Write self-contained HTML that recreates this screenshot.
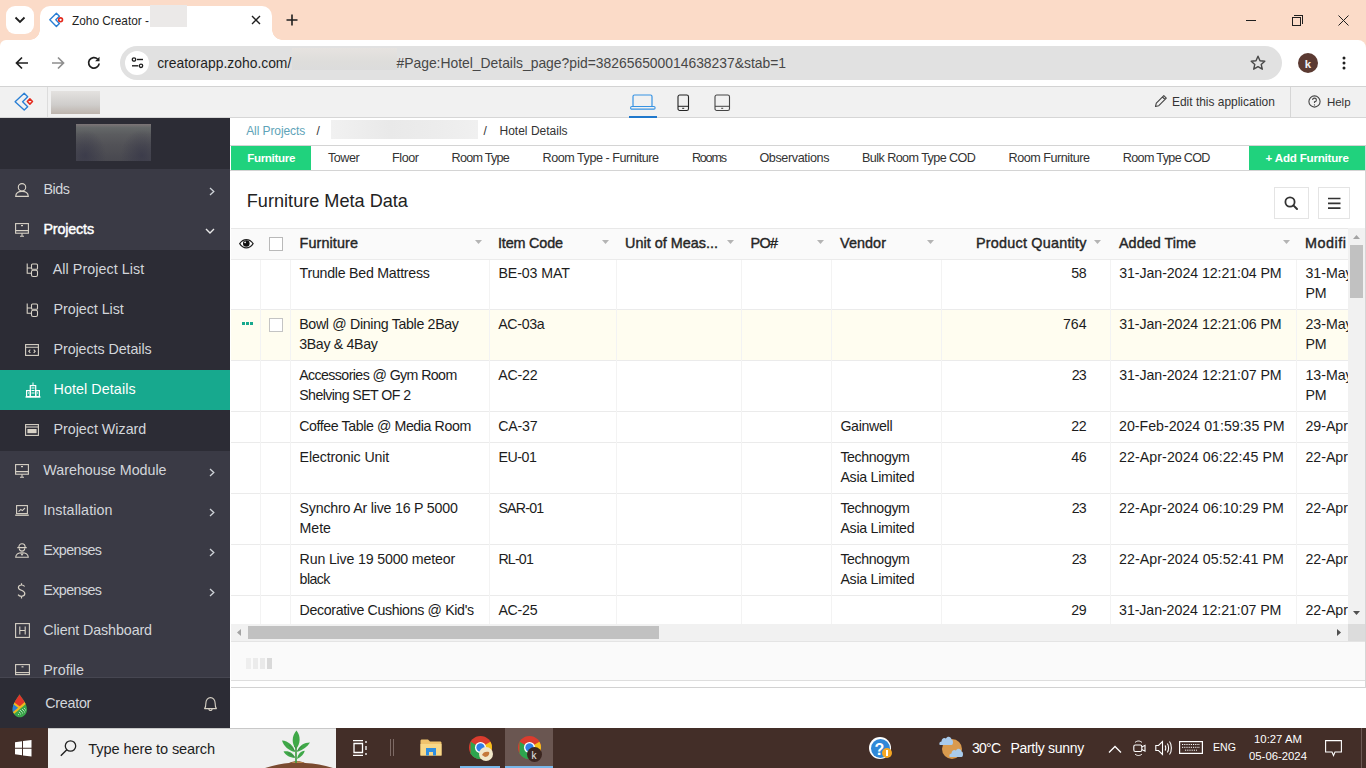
<!DOCTYPE html>
<html><head><meta charset="utf-8"><style>
*{margin:0;padding:0;box-sizing:border-box}
html,body{width:1366px;height:768px;overflow:hidden;font-family:"Liberation Sans",sans-serif;background:#fff;position:relative}
.a{position:absolute}
.t{position:absolute;white-space:nowrap}
svg{position:absolute;overflow:visible}
</style></head><body>
<div class="a" style="left:0px;top:0px;width:1366px;height:48px;background:#fbdbc8;"></div>
<div class="a" style="left:30px;top:30px;width:10px;height:10px;background:radial-gradient(circle at 0 0,#fbdbc8 9.5px,#fff 10px);"></div>
<div class="a" style="left:6px;top:6px;width:28px;height:28px;background:#fff;border-radius:9px"></div>
<svg style="left:14px;top:16px;" width="12" height="8" viewBox="0 0 12 8"><path d="M1.5 1.5 L6 6 L10.5 1.5" fill="none" stroke="#1f1f1f" stroke-width="1.8"/></svg>
<div class="a" style="left:40px;top:6px;width:232px;height:34px;background:#fff;border-radius:10px 10px 0 0"></div>
<div class="a" style="left:272px;top:30px;width:10px;height:10px;background:radial-gradient(circle at 100% 0,#fbdbc8 9.5px,#fff 10px);"></div>
<svg style="left:40px;top:0px;" width="30" height="40" viewBox="0 0 30 40"><path d="M9.8 19.8 L16.4 13.3 L19.4 16.2 L15.8 19.8 L19.4 23.4 L16.4 26.4 Z" fill="none" stroke="#2a7fd4" stroke-width="1.4" stroke-linejoin="round"/><circle cx="20.6" cy="19.8" r="1.9" fill="none" stroke="#e42a1d" stroke-width="1.6"/></svg>
<div class="t" style="left:72.00px;top:16.00px;font-size:11.850px;line-height:11.850px;color:#1f1f1f;">Zoho Creator -</div>
<div class="a" style="left:150px;top:5px;width:37px;height:22px;background:#ebe9e8;"></div>
<svg style="left:251px;top:15px;" width="10" height="10" viewBox="0 0 10 10"><path d="M1 1 L9 9 M9 1 L1 9" stroke="#1f1f1f" stroke-width="1.4"/></svg>
<svg style="left:286px;top:14px;" width="12" height="12" viewBox="0 0 12 12"><path d="M6 0.5 V11.5 M0.5 6 H11.5" stroke="#1f1f1f" stroke-width="1.6"/></svg>
<div class="a" style="left:1246px;top:20px;width:10px;height:1px;background:#1f1f1f;"></div>
<div class="a" style="left:1292px;top:17px;width:9px;height:9px;background:transparent;border:1px solid #1f1f1f"></div>
<div class="a" style="left:1294px;top:15px;width:9px;height:9px;background:transparent;border-top:1px solid #1f1f1f;border-right:1px solid #1f1f1f"></div>
<svg style="left:1338px;top:15px;" width="11" height="11" viewBox="0 0 11 11"><path d="M0.5 0.5 L10.5 10.5 M10.5 0.5 L0.5 10.5" stroke="#1f1f1f" stroke-width="1"/></svg>
<div class="a" style="left:0px;top:40px;width:1366px;height:46px;background:#fff;border-radius:6px 8px 0 0"></div>
<svg style="left:15px;top:56px;" width="14" height="14" viewBox="0 0 14 14"><path d="M13 7 H2 M7 1.5 L1.5 7 L7 12.5" fill="none" stroke="#1f1f1f" stroke-width="1.7"/></svg>
<svg style="left:51px;top:56px;" width="14" height="14" viewBox="0 0 14 14"><path d="M1 7 H12 M7 1.5 L12.5 7 L7 12.5" fill="none" stroke="#8e8e8e" stroke-width="1.7"/></svg>
<svg style="left:87px;top:56px;" width="14" height="14" viewBox="0 0 14 14"><path d="M12.2 7.5 A5.3 5.3 0 1 1 10.6 3" fill="none" stroke="#1f1f1f" stroke-width="1.7"/><path d="M12.5 0.8 V5.2 H8.1 Z" fill="#1f1f1f"/></svg>
<div class="a" style="left:120px;top:46px;width:1162px;height:34px;background:#e1e1e1;border-radius:17px"></div>
<div class="a" style="left:125px;top:51px;width:24px;height:24px;background:#fff;border-radius:12px"></div>
<svg style="left:131px;top:57px;" width="13" height="12" viewBox="0 0 13 12"><circle cx="3" cy="2.5" r="1.7" fill="none" stroke="#1f1f1f" stroke-width="1.3"/><path d="M6 2.5 H12" stroke="#1f1f1f" stroke-width="1.4"/><circle cx="10" cy="8.8" r="1.7" fill="none" stroke="#1f1f1f" stroke-width="1.3"/><path d="M1 8.8 H7.2" stroke="#1f1f1f" stroke-width="1.4"/></svg>
<div class="t" style="left:157.20px;top:57.00px;font-size:13.900px;line-height:13.900px;color:#1f1f1f;letter-spacing:-0.013px;">creatorapp.zoho.com/</div>
<div class="a" style="left:292px;top:48px;width:105px;height:22px;background:linear-gradient(180deg,#e6e3e0,#dedddb 60%,#dcdcdc);"></div>
<div class="t" style="left:396.50px;top:57.00px;font-size:13.900px;line-height:13.900px;color:#474747;letter-spacing:-0.010px;">#Page:Hotel_Details_page?pid=382656500014638237&amp;stab=1</div>
<svg style="left:1250px;top:55px;" width="16" height="16" viewBox="0 0 16 16"><path d="M8 1.2 L10 5.8 L14.8 6.2 L11.2 9.4 L12.3 14.2 L8 11.7 L3.7 14.2 L4.8 9.4 L1.2 6.2 L6 5.8 Z" fill="none" stroke="#474747" stroke-width="1.4" stroke-linejoin="round"/></svg>
<div class="a" style="left:1298px;top:53px;width:20px;height:20px;background:#5b3a32;border-radius:10px"></div>
<div class="t" style="left:1304.80px;top:59.00px;font-size:11.450px;line-height:11.450px;color:#f2f2f2;font-weight:bold;">k</div>
<svg style="left:1342px;top:56px;" width="4" height="14" viewBox="0 0 4 14"><circle cx="2" cy="2" r="1.5" fill="#1f1f1f"/><circle cx="2" cy="7" r="1.5" fill="#1f1f1f"/><circle cx="2" cy="12" r="1.5" fill="#1f1f1f"/></svg>
<div class="a" style="left:0px;top:86px;width:1366px;height:32px;background:#f1f1f1;border-top:1px solid #d3d3d3;border-bottom:1px solid #d6d6d6"></div>
<svg style="left:8px;top:88px;" width="36" height="28" viewBox="0 0 36 28"><path d="M7.1 13.7 L16.2 5.3 L19.7 8.7 L14.6 13.7 L19.7 18.7 L16.2 22.1 Z" fill="none" stroke="#2a7fd4" stroke-width="1.35" stroke-linejoin="round"/><path d="M21.9 10.9 L24.5 13.5 L21.9 16.1 L19.3 13.5 Z" fill="none" stroke="#e42a1d" stroke-width="1.5" stroke-linejoin="round"/></svg>
<div class="a" style="left:47px;top:87px;width:1px;height:30px;background:#dcdcdc;"></div>
<div class="a" style="left:51px;top:91px;width:49px;height:23px;background:linear-gradient(180deg,#e4e2e0,#cfcdcb 60%,#bdb4ad);"></div>
<svg style="left:630px;top:94px;" width="26" height="16" viewBox="0 0 26 16"><rect x="3" y="1" width="19" height="12" rx="1.5" fill="none" stroke="#3793e3" stroke-width="1.2"/><rect x="0.6" y="12.5" width="24.5" height="2.6" rx="1.2" fill="#f1f1f1" stroke="#3793e3" stroke-width="1.1"/></svg>
<div class="a" style="left:629px;top:116px;width:28px;height:2px;background:#1f78cc;"></div>
<svg style="left:677px;top:94px;" width="13" height="17" viewBox="0 0 13 17"><rect x="1" y="1" width="10.5" height="15.5" rx="1.8" fill="none" stroke="#222" stroke-width="1.1"/><path d="M1 12.3 H11.5" stroke="#222" stroke-width="1"/><rect x="5.2" y="13.8" width="2" height="1" fill="#222"/></svg>
<svg style="left:714px;top:94px;" width="17" height="17" viewBox="0 0 17 17"><rect x="1" y="1" width="14.5" height="15.5" rx="1.8" fill="none" stroke="#444" stroke-width="1.1"/><path d="M1 12.3 H15.5" stroke="#444" stroke-width="1"/><rect x="7.2" y="13.8" width="2" height="1" fill="#444"/></svg>
<svg style="left:1154px;top:94px;" width="14" height="14" viewBox="0 0 14 14"><path d="M1.5 12.5 L2.3 9.2 L9.8 1.7 L12.3 4.2 L4.8 11.7 Z M8.5 3 L11 5.5" fill="none" stroke="#444" stroke-width="1.1" stroke-linejoin="round"/></svg>
<div class="t" style="left:1172.00px;top:97.00px;font-size:11.950px;line-height:11.950px;color:#333;">Edit this application</div>
<div class="a" style="left:1290px;top:87px;width:1px;height:30px;background:#d6d6d6;"></div>
<svg style="left:1308px;top:95px;" width="13" height="13" viewBox="0 0 13 13"><circle cx="6.5" cy="6.5" r="5.6" fill="none" stroke="#444" stroke-width="1.1"/><path d="M4.6 5 A1.9 1.9 0 1 1 6.5 6.9 V8" fill="none" stroke="#444" stroke-width="1.1"/><circle cx="6.5" cy="9.9" r="0.65" fill="#444"/></svg>
<div class="t" style="left:1326.90px;top:97.00px;font-size:11.500px;line-height:11.500px;color:#333;letter-spacing:0.015px;">Help</div>
<div class="a" style="left:0px;top:118px;width:230px;height:51px;background:#2c2c35;"></div>
<div class="a" style="left:76px;top:124px;width:75px;height:37px;background:radial-gradient(ellipse 28% 70% at 12% 85%,rgba(55,55,72,0.75),rgba(55,55,72,0)),radial-gradient(ellipse 28% 70% at 88% 85%,rgba(55,55,72,0.75),rgba(55,55,72,0)),linear-gradient(180deg,#7d7577 0,#656869 10%,#5b5c5f 28%,#525257 55%,#48484f 100%);"></div>
<div class="a" style="left:0px;top:169px;width:230px;height:81px;background:#3a3a45;"></div>
<div class="a" style="left:0px;top:250px;width:230px;height:120px;background:#2c2c35;"></div>
<div class="a" style="left:0px;top:370px;width:230px;height:40px;background:#17a98e;"></div>
<div class="a" style="left:0px;top:410px;width:230px;height:41px;background:#2c2c35;"></div>
<div class="a" style="left:0px;top:451px;width:230px;height:226px;background:#3a3a45;"></div>
<svg style="left:15px;top:183px;" width="14" height="14" viewBox="0 0 14 14"><circle cx="7" cy="4.3" r="3.7" fill="none" stroke="#d8d2c6" stroke-width="1.1"/><path d="M0.7 13.4 C0.9 9.6 3.6 8.4 7 8.4 C10.4 8.4 13.1 9.6 13.3 13.4 Z" fill="none" stroke="#d8d2c6" stroke-width="1.1"/></svg>
<div class="t" style="left:43.40px;top:182.00px;font-size:14.300px;line-height:14.300px;color:#d3d6db;letter-spacing:-0.438px;">Bids</div>
<svg style="left:209px;top:187px;" width="6" height="9" viewBox="0 0 6 9"><path d="M1 1 L4.8 4.5 L1 8" fill="none" stroke="#cfd3d8" stroke-width="1.3"/></svg>
<svg style="left:15px;top:223px;" width="14" height="14" viewBox="0 0 14 14"><rect x="0.6" y="0.6" width="12.8" height="9.6" fill="none" stroke="#d8d2c6" stroke-width="1.1"/><path d="M0.6 7.6 H13.4 M5 13.3 H9 M7 10.2 V13.3" fill="none" stroke="#d8d2c6" stroke-width="1.1"/><rect x="6" y="2" width="2" height="1.2" fill="#d8d2c6"/></svg>
<div class="t" style="left:43.40px;top:222.00px;font-size:14.300px;line-height:14.300px;color:#fff;letter-spacing:-0.136px;-webkit-text-stroke:0.45px #fff;">Projects</div>
<svg style="left:205px;top:228px;" width="10" height="6" viewBox="0 0 10 6"><path d="M1 1 L5 5 L9 1" fill="none" stroke="#e8e8e8" stroke-width="1.4"/></svg>
<svg style="left:26px;top:263px;" width="13" height="15" viewBox="0 0 13 15"><path d="M1.2 0.5 V10.2 H5.5 M1.2 5 H5.5" fill="none" stroke="#d8d2c6" stroke-width="1.1"/><rect x="5.5" y="1" width="6" height="5.2" rx="1" fill="none" stroke="#d8d2c6" stroke-width="1.1"/><rect x="5.5" y="7.2" width="6" height="6.3" rx="1.6" fill="none" stroke="#d8d2c6" stroke-width="1.1"/></svg>
<div class="t" style="left:52.70px;top:262.00px;font-size:14.300px;line-height:14.300px;color:#d3d6db;letter-spacing:0.067px;">All Project List</div>
<svg style="left:26px;top:303px;" width="13" height="15" viewBox="0 0 13 15"><path d="M1.2 0.5 V10.2 H5.5 M1.2 5 H5.5" fill="none" stroke="#d8d2c6" stroke-width="1.1"/><rect x="5.5" y="1" width="6" height="5.2" rx="1" fill="none" stroke="#d8d2c6" stroke-width="1.1"/><rect x="5.5" y="7.2" width="6" height="6.3" rx="1.6" fill="none" stroke="#d8d2c6" stroke-width="1.1"/></svg>
<div class="t" style="left:53.50px;top:302.00px;font-size:14.300px;line-height:14.300px;color:#d3d6db;letter-spacing:-0.039px;">Project List</div>
<svg style="left:25px;top:344px;" width="14" height="12" viewBox="0 0 14 12"><rect x="0.6" y="0.6" width="12.8" height="10.8" fill="none" stroke="#d8d2c6" stroke-width="1.1"/><path d="M0.6 3.3 H13.4 M5.3 5.6 L3.8 7.2 L5.3 8.8 M8.7 5.6 L10.2 7.2 L8.7 8.8" fill="none" stroke="#d8d2c6" stroke-width="1.1"/></svg>
<div class="t" style="left:53.50px;top:342.00px;font-size:14.300px;line-height:14.300px;color:#d3d6db;letter-spacing:-0.076px;">Projects Details</div>
<svg style="left:25px;top:382px;" width="16" height="16" viewBox="0 0 16 16"><path d="M0.5 15 H15.5" stroke="#fff" stroke-width="1.3"/><rect x="5.3" y="3.6" width="5.4" height="11" fill="none" stroke="#fff" stroke-width="1.2"/><rect x="1.6" y="8.6" width="3.7" height="6" fill="none" stroke="#fff" stroke-width="1.2"/><rect x="10.7" y="8.6" width="3.7" height="6" fill="none" stroke="#fff" stroke-width="1.2"/><path d="M8 0.5 V3.6 M6.5 6 H9.5 M6.5 8.5 H9.5 M6.5 11 H9.5 M3 11 H4 M12 11 H13" stroke="#fff" stroke-width="1"/></svg>
<div class="t" style="left:53.50px;top:382.00px;font-size:14.300px;line-height:14.300px;color:#fff;letter-spacing:0.086px;">Hotel Details</div>
<svg style="left:25px;top:424px;" width="14" height="12" viewBox="0 0 14 12"><rect x="0.6" y="0.6" width="12.8" height="10.8" fill="none" stroke="#d8d2c6" stroke-width="1.1"/><path d="M0.6 3 H13.4" fill="none" stroke="#d8d2c6" stroke-width="1.1"/><rect x="2.4" y="5" width="9.2" height="4.2" fill="#d8d2c6"/></svg>
<div class="t" style="left:53.50px;top:422.00px;font-size:14.300px;line-height:14.300px;color:#d3d6db;letter-spacing:-0.014px;">Project Wizard</div>
<svg style="left:15px;top:464px;" width="14" height="14" viewBox="0 0 14 14"><rect x="0.6" y="0.6" width="12.8" height="9.6" fill="none" stroke="#d8d2c6" stroke-width="1.1"/><path d="M0.6 7.6 H13.4 M5 13.3 H9 M7 10.2 V13.3" fill="none" stroke="#d8d2c6" stroke-width="1.1"/><rect x="6" y="2" width="2" height="1.2" fill="#d8d2c6"/></svg>
<div class="t" style="left:43.30px;top:463.00px;font-size:14.300px;line-height:14.300px;color:#d3d6db;letter-spacing:-0.011px;">Warehouse Module</div>
<svg style="left:209px;top:468px;" width="6" height="9" viewBox="0 0 6 9"><path d="M1 1 L4.8 4.5 L1 8" fill="none" stroke="#cfd3d8" stroke-width="1.3"/></svg>
<svg style="left:15px;top:505px;" width="14" height="11" viewBox="0 0 14 11"><rect x="1.6" y="0.6" width="10.8" height="8" fill="none" stroke="#d8d2c6" stroke-width="1.1"/><path d="M0.2 10.2 H13.8" stroke="#d8d2c6" stroke-width="1.3"/><path d="M3.6 6.6 L5.8 4.4 L7.3 5.6 L10 3" fill="none" stroke="#d8d2c6" stroke-width="1.1"/></svg>
<div class="t" style="left:43.30px;top:503.00px;font-size:14.300px;line-height:14.300px;color:#d3d6db;letter-spacing:0.067px;">Installation</div>
<svg style="left:209px;top:508px;" width="6" height="9" viewBox="0 0 6 9"><path d="M1 1 L4.8 4.5 L1 8" fill="none" stroke="#cfd3d8" stroke-width="1.3"/></svg>
<svg style="left:15px;top:543px;" width="14" height="15" viewBox="0 0 14 15"><path d="M2.3 4.6 H11.7 M3.8 4.6 C3.8 1.6 5.5 0.7 7 0.7 C8.5 0.7 10.2 1.6 10.2 4.6 M4.3 5.6 C4.3 9 9.7 9 9.7 5.6 M0.7 14.3 C0.9 10.8 3 9.7 7 9.7 C11 9.7 13.1 10.8 13.3 14.3 Z M5.5 9.8 L7 12 L8.5 9.8" fill="none" stroke="#d8d2c6" stroke-width="1.1"/></svg>
<div class="t" style="left:43.30px;top:543.00px;font-size:14.300px;line-height:14.300px;color:#d3d6db;letter-spacing:-0.587px;">Expenses</div>
<svg style="left:209px;top:548px;" width="6" height="9" viewBox="0 0 6 9"><path d="M1 1 L4.8 4.5 L1 8" fill="none" stroke="#cfd3d8" stroke-width="1.3"/></svg>
<svg style="left:16px;top:583px;" width="11" height="16" viewBox="0 0 11 16"><path d="M8.6 3.6 C8 2.4 6.8 2 5.5 2 C3.6 2 2.4 3 2.4 4.5 C2.4 8 8.8 6.6 8.8 10.6 C8.8 12.3 7.4 13.3 5.5 13.3 C4 13.3 2.8 12.8 2.1 11.6 M5.5 0.3 V2 M5.5 13.3 V15.5" fill="none" stroke="#d8d2c6" stroke-width="1.2"/></svg>
<div class="t" style="left:43.30px;top:583.00px;font-size:14.300px;line-height:14.300px;color:#d3d6db;letter-spacing:-0.587px;">Expenses</div>
<svg style="left:209px;top:588px;" width="6" height="9" viewBox="0 0 6 9"><path d="M1 1 L4.8 4.5 L1 8" fill="none" stroke="#cfd3d8" stroke-width="1.3"/></svg>
<svg style="left:15px;top:623px;" width="15" height="15" viewBox="0 0 15 15"><rect x="0.6" y="0.6" width="13.8" height="13.8" fill="none" stroke="#d8d2c6" stroke-width="1.1"/><path d="M4.8 3.6 V11.4 M10.2 3.6 V11.4 M4.8 7.5 H10.2" fill="none" stroke="#d8d2c6" stroke-width="1.1"/></svg>
<div class="t" style="left:43.30px;top:623.00px;font-size:14.300px;line-height:14.300px;color:#d3d6db;letter-spacing:-0.113px;">Client Dashboard</div>
<svg style="left:15px;top:664px;" width="15" height="12" viewBox="0 0 15 12"><rect x="0.6" y="0.6" width="13.8" height="10" fill="none" stroke="#d8d2c6" stroke-width="1.1"/><path d="M0.6 8.6 H14.4" fill="none" stroke="#d8d2c6" stroke-width="1.1"/><rect x="6.5" y="2.2" width="2" height="1.2" fill="#d8d2c6"/></svg>
<div class="t" style="left:43.30px;top:663.00px;font-size:14.300px;line-height:14.300px;color:#d3d6db;letter-spacing:0.027px;">Profile</div>
<div class="a" style="left:0px;top:677px;width:230px;height:51px;background:#2c2c35;border-top:1px solid #464651"></div>
<svg style="left:12px;top:694px;" width="16" height="24" viewBox="0 0 16 24"><defs><clipPath id="dr"><path d="M7.5 0.3 C9 3.5 15 9 15 15.5 C15 20 11.5 23.3 7.8 23.3 C4 23.3 0.6 20 0.6 15.5 C0.6 9 6 3.5 7.5 0.3 Z"/></clipPath></defs><g clip-path="url(#dr)"><rect x="0" y="0" width="16" height="24" fill="#3aa54a"/><path d="M0 8.5 L7.5 13.5 L0 19.5 Z" fill="#2a7fd4"/><path d="M7.5 0 L14.5 7.5 L7.4 13 L1 8.5 Z" fill="#e0352b"/><path d="M1 8.8 L7.4 13.4" stroke="#f2b81e" stroke-width="2"/><path d="M1.5 19 L15 7.5" stroke="#f2b81e" stroke-width="2.2"/><rect x="8" y="16" width="0.9" height="0.9" fill="#cfe8cf"/><rect x="10" y="15" width="0.9" height="0.9" fill="#cfe8cf"/><rect x="12" y="14" width="0.9" height="0.9" fill="#cfe8cf"/><rect x="7" y="18" width="0.9" height="0.9" fill="#cfe8cf"/><rect x="9" y="17" width="0.9" height="0.9" fill="#cfe8cf"/><rect x="11" y="16" width="0.9" height="0.9" fill="#cfe8cf"/><rect x="13" y="15.5" width="0.9" height="0.9" fill="#cfe8cf"/><rect x="6" y="20" width="0.9" height="0.9" fill="#cfe8cf"/><rect x="8" y="19.5" width="0.9" height="0.9" fill="#cfe8cf"/><rect x="10" y="18.5" width="0.9" height="0.9" fill="#cfe8cf"/><rect x="12" y="17.5" width="0.9" height="0.9" fill="#cfe8cf"/></g></svg>
<div class="t" style="left:45.20px;top:696.00px;font-size:14.300px;line-height:14.300px;color:#d3d6db;letter-spacing:-0.248px;">Creator</div>
<svg style="left:203px;top:696px;" width="15" height="17" viewBox="0 0 15 17"><path d="M1.6 12.6 C2.8 11 2.9 9 2.9 7 C2.9 3.9 5 1.6 7.5 1.6 C10 1.6 12.1 3.9 12.1 7 C12.1 9 12.2 11 13.4 12.6 Z M5.8 13.3 A1.8 1.8 0 0 0 9.2 13.3" fill="none" stroke="#d8d2c6" stroke-width="1.1" stroke-linejoin="round"/></svg>
<div class="t" style="left:246.20px;top:125.00px;font-size:12.000px;line-height:12.000px;color:#5ea3b8;letter-spacing:-0.093px;">All Projects</div>
<div class="t" style="left:316.50px;top:125.00px;font-size:12.000px;line-height:12.000px;color:#333;">/</div>
<div class="a" style="left:331px;top:120px;width:147px;height:19px;background:linear-gradient(90deg,#f1f1f1,#e9e9e9 40%,#ececec 70%,#f0f0f0);"></div>
<div class="t" style="left:483.50px;top:125.00px;font-size:12.000px;line-height:12.000px;color:#333;">/</div>
<div class="t" style="left:499.50px;top:125.00px;font-size:12.000px;line-height:12.000px;color:#333;letter-spacing:0.006px;">Hotel Details</div>
<div class="a" style="left:230px;top:145px;width:1136px;height:1px;background:#d4d4d4;"></div>
<div class="a" style="left:230px;top:170px;width:1136px;height:1px;background:#d4d4d4;"></div>
<div class="a" style="left:231px;top:146px;width:80px;height:24px;background:#20d27d;"></div>
<div class="a" style="left:1249px;top:146px;width:116px;height:24px;background:#20d27d;"></div>
<div class="a" style="left:1365px;top:146px;width:1px;height:542px;background:#d6d6d6;"></div>
<div class="t" style="left:247.20px;top:152.00px;font-size:11.600px;line-height:11.600px;color:#fff;font-weight:bold;letter-spacing:-0.339px;">Furniture</div>
<div class="t" style="left:328.00px;top:152.00px;font-size:12.600px;line-height:12.600px;color:#333;letter-spacing:-0.479px;">Tower</div>
<div class="t" style="left:392.00px;top:152.00px;font-size:12.600px;line-height:12.600px;color:#333;letter-spacing:-0.426px;">Floor</div>
<div class="t" style="left:451.60px;top:152.00px;font-size:12.600px;line-height:12.600px;color:#333;letter-spacing:-0.762px;">Room Type</div>
<div class="t" style="left:542.50px;top:152.00px;font-size:12.600px;line-height:12.600px;color:#333;letter-spacing:-0.466px;">Room Type - Furniture</div>
<div class="t" style="left:691.90px;top:152.00px;font-size:12.600px;line-height:12.600px;color:#333;letter-spacing:-1.204px;">Rooms</div>
<div class="t" style="left:759.40px;top:152.00px;font-size:12.600px;line-height:12.600px;color:#333;letter-spacing:-0.376px;">Observations</div>
<div class="t" style="left:862.00px;top:152.00px;font-size:12.600px;line-height:12.600px;color:#333;letter-spacing:-0.571px;">Bulk Room Type COD</div>
<div class="t" style="left:1008.60px;top:152.00px;font-size:12.600px;line-height:12.600px;color:#333;letter-spacing:-0.472px;">Room Furniture</div>
<div class="t" style="left:1122.80px;top:152.00px;font-size:12.600px;line-height:12.600px;color:#333;letter-spacing:-0.666px;">Room Type COD</div>
<div class="t" style="left:1265.60px;top:152.00px;font-size:11.600px;line-height:11.600px;color:#fff;font-weight:bold;letter-spacing:-0.210px;">+ Add Furniture</div>
<div class="t" style="left:246.80px;top:192.00px;font-size:18.100px;line-height:18.100px;color:#222;letter-spacing:0.013px;">Furniture Meta Data</div>
<div class="a" style="left:1274px;top:187px;width:35px;height:32px;background:#fff;border:1px solid #e4e4e4"></div>
<svg style="left:1284px;top:196px;" width="15" height="15" viewBox="0 0 15 15"><circle cx="6" cy="6" r="4.6" fill="none" stroke="#333" stroke-width="1.8"/><path d="M9.4 9.4 L13 13" stroke="#333" stroke-width="2" stroke-linecap="round"/></svg>
<div class="a" style="left:1318px;top:187px;width:32px;height:32px;background:#fff;border:1px solid #e4e4e4"></div>
<svg style="left:1328px;top:197px;" width="13" height="13" viewBox="0 0 13 13"><path d="M0 1.5 H12.5 M0 6.3 H12.5 M0 11.1 H12.5" stroke="#333" stroke-width="1.7"/></svg>
<div class="a" style="left:231px;top:228px;width:1117px;height:396px;overflow:hidden">
<div class="a" style="left:0px;top:0px;width:1117px;height:32px;background:#fafafa;border-top:1px solid #e8e8e8;border-bottom:1px solid #ebebeb"></div>
<svg style="left:8px;top:11px;" width="15" height="10" viewBox="0 0 15 10"><path d="M0.7 4.6 C2.7 1.6 5 0.6 7.3 0.6 C9.8 0.6 12.1 1.6 14.1 4.6 C12.1 7.8 9.8 8.8 7.3 8.8 C5 8.8 2.7 7.8 0.7 4.6 Z" fill="#fff" stroke="#222" stroke-width="1.2"/><circle cx="7.3" cy="4.5" r="3.3" fill="#111"/><circle cx="6.1" cy="3.3" r="0.9" fill="#fff"/></svg>
<div class="a" style="left:38px;top:9px;width:14px;height:14px;background:#fff;border:1px solid #b9b9b9"></div>
<div class="t" style="left:68.60px;top:8.00px;font-size:14.400px;line-height:14.400px;color:#262626;letter-spacing:0.096px;-webkit-text-stroke:0.4px #262626;">Furniture</div>
<svg style="left:244px;top:12px;" width="7" height="4" viewBox="0 0 7 4"><path d="M0 0 H7 L3.5 4 Z" fill="#b4b4b4"/></svg>
<div class="t" style="left:267.00px;top:8.00px;font-size:14.400px;line-height:14.400px;color:#262626;letter-spacing:-0.178px;-webkit-text-stroke:0.4px #262626;">Item Code</div>
<svg style="left:371.20000000000005px;top:12px;" width="7" height="4" viewBox="0 0 7 4"><path d="M0 0 H7 L3.5 4 Z" fill="#b4b4b4"/></svg>
<div class="t" style="left:394.00px;top:8.00px;font-size:14.400px;line-height:14.400px;color:#262626;letter-spacing:0.012px;-webkit-text-stroke:0.4px #262626;">Unit of Meas...</div>
<svg style="left:496.4px;top:12px;" width="7" height="4" viewBox="0 0 7 4"><path d="M0 0 H7 L3.5 4 Z" fill="#b4b4b4"/></svg>
<div class="t" style="left:519.50px;top:8.00px;font-size:14.400px;line-height:14.400px;color:#262626;letter-spacing:-0.657px;-webkit-text-stroke:0.4px #262626;">PO#</div>
<svg style="left:585.9px;top:12px;" width="7" height="4" viewBox="0 0 7 4"><path d="M0 0 H7 L3.5 4 Z" fill="#b4b4b4"/></svg>
<div class="t" style="left:609.00px;top:8.00px;font-size:14.400px;line-height:14.400px;color:#262626;letter-spacing:0.073px;-webkit-text-stroke:0.4px #262626;">Vendor</div>
<svg style="left:696px;top:12px;" width="7" height="4" viewBox="0 0 7 4"><path d="M0 0 H7 L3.5 4 Z" fill="#b4b4b4"/></svg>
<div class="t" style="left:745.00px;top:8.00px;font-size:14.400px;line-height:14.400px;color:#262626;letter-spacing:0.217px;-webkit-text-stroke:0.4px #262626;">Product Quantity</div>
<svg style="left:862.5999999999999px;top:12px;" width="7" height="4" viewBox="0 0 7 4"><path d="M0 0 H7 L3.5 4 Z" fill="#b4b4b4"/></svg>
<div class="t" style="left:888.00px;top:8.00px;font-size:14.400px;line-height:14.400px;color:#262626;letter-spacing:0.018px;-webkit-text-stroke:0.4px #262626;">Added Time</div>
<svg style="left:1051.6px;top:12px;" width="7" height="4" viewBox="0 0 7 4"><path d="M0 0 H7 L3.5 4 Z" fill="#b4b4b4"/></svg>
<div class="t" style="left:1074.00px;top:8.00px;font-size:14.400px;line-height:14.400px;color:#262626;letter-spacing:0.516px;-webkit-text-stroke:0.4px #262626;">Modifi</div>
<div class="a" style="left:0px;top:82px;width:1117px;height:50px;background:#fffdf0;"></div>
<div class="a" style="left:0px;top:81px;width:1117px;height:1px;background:#ebebeb;"></div>
<div class="a" style="left:0px;top:132px;width:1117px;height:1px;background:#ebebeb;"></div>
<div class="a" style="left:0px;top:183px;width:1117px;height:1px;background:#ebebeb;"></div>
<div class="a" style="left:0px;top:214px;width:1117px;height:1px;background:#ebebeb;"></div>
<div class="a" style="left:0px;top:265px;width:1117px;height:1px;background:#ebebeb;"></div>
<div class="a" style="left:0px;top:316px;width:1117px;height:1px;background:#ebebeb;"></div>
<div class="a" style="left:0px;top:367px;width:1117px;height:1px;background:#ebebeb;"></div>
<div class="a" style="left:29px;top:32px;width:1px;height:400px;background:#f3f3f3;"></div>
<div class="a" style="left:59px;top:32px;width:1px;height:400px;background:#f3f3f3;"></div>
<div class="a" style="left:258px;top:32px;width:1px;height:400px;background:#f3f3f3;"></div>
<div class="a" style="left:385px;top:32px;width:1px;height:400px;background:#f3f3f3;"></div>
<div class="a" style="left:510px;top:32px;width:1px;height:400px;background:#f3f3f3;"></div>
<div class="a" style="left:600px;top:32px;width:1px;height:400px;background:#f3f3f3;"></div>
<div class="a" style="left:710px;top:32px;width:1px;height:400px;background:#f3f3f3;"></div>
<div class="a" style="left:879px;top:32px;width:1px;height:400px;background:#f3f3f3;"></div>
<div class="a" style="left:1065px;top:32px;width:1px;height:400px;background:#f3f3f3;"></div>
<div class="t" style="left:68.60px;top:38.00px;font-size:14.200px;line-height:14.200px;color:#1c1c1c;letter-spacing:-0.254px;">Trundle Bed Mattress</div>
<div class="t" style="left:267.50px;top:38.00px;font-size:14.200px;line-height:14.200px;color:#1c1c1c;letter-spacing:-0.104px;">BE-03 MAT</div>
<div class="t" style="left:840.30px;top:38.00px;font-size:14.200px;line-height:14.200px;color:#1c1c1c;letter-spacing:-0.490px;">58</div>
<div class="t" style="left:888.20px;top:38.00px;font-size:14.200px;line-height:14.200px;color:#1c1c1c;letter-spacing:-0.073px;">31-Jan-2024 12:21:04 PM</div>
<div class="t" style="left:1074.40px;top:38.00px;font-size:14.200px;line-height:14.200px;color:#1c1c1c;">31-May-2024 04:12:10</div>
<div class="t" style="left:1074.40px;top:58.00px;font-size:14.200px;line-height:14.200px;color:#1c1c1c;">PM</div>
<div class="t" style="left:68.20px;top:89.00px;font-size:14.200px;line-height:14.200px;color:#1c1c1c;letter-spacing:-0.321px;">Bowl @ Dining Table 2Bay</div>
<div class="t" style="left:267.20px;top:89.00px;font-size:14.200px;line-height:14.200px;color:#1c1c1c;letter-spacing:-0.313px;">AC-03a</div>
<div class="t" style="left:832.00px;top:89.00px;font-size:14.200px;line-height:14.200px;color:#1c1c1c;letter-spacing:-0.043px;">764</div>
<div class="t" style="left:888.20px;top:89.00px;font-size:14.200px;line-height:14.200px;color:#1c1c1c;letter-spacing:-0.073px;">31-Jan-2024 12:21:06 PM</div>
<div class="t" style="left:1074.40px;top:89.00px;font-size:14.200px;line-height:14.200px;color:#1c1c1c;">23-May-2024 04:12:10</div>
<div class="t" style="left:68.20px;top:109.00px;font-size:14.200px;line-height:14.200px;color:#1c1c1c;letter-spacing:-0.339px;">3Bay &amp; 4Bay</div>
<div class="t" style="left:1074.40px;top:109.00px;font-size:14.200px;line-height:14.200px;color:#1c1c1c;">PM</div>
<div class="t" style="left:68.20px;top:140.00px;font-size:14.200px;line-height:14.200px;color:#1c1c1c;letter-spacing:-0.593px;">Accessories @ Gym Room</div>
<div class="t" style="left:267.20px;top:140.00px;font-size:14.200px;line-height:14.200px;color:#1c1c1c;letter-spacing:-0.189px;">AC-22</div>
<div class="t" style="left:840.80px;top:140.00px;font-size:14.200px;line-height:14.200px;color:#1c1c1c;letter-spacing:-0.990px;">23</div>
<div class="t" style="left:888.20px;top:140.00px;font-size:14.200px;line-height:14.200px;color:#1c1c1c;letter-spacing:-0.073px;">31-Jan-2024 12:21:07 PM</div>
<div class="t" style="left:1074.40px;top:140.00px;font-size:14.200px;line-height:14.200px;color:#1c1c1c;">13-May-2024 04:12:10</div>
<div class="t" style="left:68.20px;top:160.00px;font-size:14.200px;line-height:14.200px;color:#1c1c1c;letter-spacing:-0.580px;">Shelving SET OF 2</div>
<div class="t" style="left:1074.40px;top:160.00px;font-size:14.200px;line-height:14.200px;color:#1c1c1c;">PM</div>
<div class="t" style="left:68.20px;top:191.00px;font-size:14.200px;line-height:14.200px;color:#1c1c1c;letter-spacing:-0.409px;">Coffee Table @ Media Room</div>
<div class="t" style="left:267.20px;top:191.00px;font-size:14.200px;line-height:14.200px;color:#1c1c1c;letter-spacing:-0.189px;">CA-37</div>
<div class="t" style="left:609.40px;top:191.00px;font-size:14.200px;line-height:14.200px;color:#1c1c1c;letter-spacing:-0.322px;">Gainwell</div>
<div class="t" style="left:840.30px;top:191.00px;font-size:14.200px;line-height:14.200px;color:#1c1c1c;letter-spacing:-0.390px;">22</div>
<div class="t" style="left:888.10px;top:191.00px;font-size:14.200px;line-height:14.200px;color:#1c1c1c;letter-spacing:-0.008px;">20-Feb-2024 01:59:35 PM</div>
<div class="t" style="left:1074.40px;top:191.00px;font-size:14.200px;line-height:14.200px;color:#1c1c1c;">29-Apr-2024 01:12:10</div>
<div class="t" style="left:68.60px;top:222.00px;font-size:14.200px;line-height:14.200px;color:#1c1c1c;letter-spacing:-0.132px;">Electronic Unit</div>
<div class="t" style="left:267.40px;top:222.00px;font-size:14.200px;line-height:14.200px;color:#1c1c1c;letter-spacing:-0.414px;">EU-01</div>
<div class="t" style="left:609.40px;top:222.00px;font-size:14.200px;line-height:14.200px;color:#1c1c1c;letter-spacing:-0.377px;">Technogym</div>
<div class="t" style="left:840.30px;top:222.00px;font-size:14.200px;line-height:14.200px;color:#1c1c1c;letter-spacing:-0.390px;">46</div>
<div class="t" style="left:888.10px;top:222.00px;font-size:14.200px;line-height:14.200px;color:#1c1c1c;letter-spacing:0.068px;">22-Apr-2024 06:22:45 PM</div>
<div class="t" style="left:1074.40px;top:222.00px;font-size:14.200px;line-height:14.200px;color:#1c1c1c;">22-Apr-2024 06:22:45</div>
<div class="t" style="left:609.40px;top:242.00px;font-size:14.200px;line-height:14.200px;color:#1c1c1c;letter-spacing:-0.277px;">Asia Limited</div>
<div class="t" style="left:68.60px;top:273.00px;font-size:14.200px;line-height:14.200px;color:#1c1c1c;letter-spacing:-0.198px;">Synchro Ar live 16 P 5000</div>
<div class="t" style="left:267.40px;top:273.00px;font-size:14.200px;line-height:14.200px;color:#1c1c1c;letter-spacing:-0.786px;">SAR-01</div>
<div class="t" style="left:609.40px;top:273.00px;font-size:14.200px;line-height:14.200px;color:#1c1c1c;letter-spacing:-0.377px;">Technogym</div>
<div class="t" style="left:840.80px;top:273.00px;font-size:14.200px;line-height:14.200px;color:#1c1c1c;letter-spacing:-0.890px;">23</div>
<div class="t" style="left:888.10px;top:273.00px;font-size:14.200px;line-height:14.200px;color:#1c1c1c;letter-spacing:0.068px;">22-Apr-2024 06:10:29 PM</div>
<div class="t" style="left:1074.40px;top:273.00px;font-size:14.200px;line-height:14.200px;color:#1c1c1c;">22-Apr-2024 06:10:29</div>
<div class="t" style="left:68.60px;top:293.00px;font-size:14.200px;line-height:14.200px;color:#1c1c1c;letter-spacing:-0.056px;">Mete</div>
<div class="t" style="left:609.40px;top:293.00px;font-size:14.200px;line-height:14.200px;color:#1c1c1c;letter-spacing:-0.277px;">Asia Limited</div>
<div class="t" style="left:68.60px;top:324.00px;font-size:14.200px;line-height:14.200px;color:#1c1c1c;letter-spacing:-0.171px;">Run Live 19 5000 meteor</div>
<div class="t" style="left:267.40px;top:324.00px;font-size:14.200px;line-height:14.200px;color:#1c1c1c;letter-spacing:-0.795px;">RL-01</div>
<div class="t" style="left:609.40px;top:324.00px;font-size:14.200px;line-height:14.200px;color:#1c1c1c;letter-spacing:-0.377px;">Technogym</div>
<div class="t" style="left:840.80px;top:324.00px;font-size:14.200px;line-height:14.200px;color:#1c1c1c;letter-spacing:-0.890px;">23</div>
<div class="t" style="left:888.10px;top:324.00px;font-size:14.200px;line-height:14.200px;color:#1c1c1c;letter-spacing:0.068px;">22-Apr-2024 05:52:41 PM</div>
<div class="t" style="left:1074.40px;top:324.00px;font-size:14.200px;line-height:14.200px;color:#1c1c1c;">22-Apr-2024 05:52:41</div>
<div class="t" style="left:68.60px;top:344.00px;font-size:14.200px;line-height:14.200px;color:#1c1c1c;letter-spacing:-0.568px;">black</div>
<div class="t" style="left:609.40px;top:344.00px;font-size:14.200px;line-height:14.200px;color:#1c1c1c;letter-spacing:-0.277px;">Asia Limited</div>
<div class="t" style="left:68.60px;top:375.00px;font-size:14.200px;line-height:14.200px;color:#1c1c1c;letter-spacing:-0.345px;">Decorative Cushions @ Kid's</div>
<div class="t" style="left:267.40px;top:375.00px;font-size:14.200px;line-height:14.200px;color:#1c1c1c;letter-spacing:-0.239px;">AC-25</div>
<div class="t" style="left:840.30px;top:375.00px;font-size:14.200px;line-height:14.200px;color:#1c1c1c;letter-spacing:-0.390px;">29</div>
<div class="t" style="left:888.10px;top:375.00px;font-size:14.200px;line-height:14.200px;color:#1c1c1c;letter-spacing:-0.082px;">31-Jan-2024 12:21:07 PM</div>
<div class="t" style="left:1074.40px;top:375.00px;font-size:14.200px;line-height:14.200px;color:#1c1c1c;">22-Apr-2024 12:21:07</div>
<div class="a" style="left:11px;top:94px;width:2.6px;height:2.6px;background:#17a98e;"></div>
<div class="a" style="left:15px;top:94px;width:2.6px;height:2.6px;background:#17a98e;"></div>
<div class="a" style="left:19px;top:94px;width:2.6px;height:2.6px;background:#17a98e;"></div>
<div class="a" style="left:38px;top:90px;width:14px;height:14px;background:#fff;border:1px solid #c4c4c4"></div>
</div>
<div class="a" style="left:1348px;top:228px;width:17px;height:396px;background:#f1f1f1;"></div>
<div class="a" style="left:1350px;top:245px;width:13px;height:53px;background:#c1c1c1;"></div>
<svg style="left:1353px;top:235px;" width="8" height="4" viewBox="0 0 8 4"><path d="M0 4 H7 L3.5 0 Z" fill="#a3a3a3"/></svg>
<svg style="left:1353px;top:611px;" width="8" height="4" viewBox="0 0 8 4"><path d="M0 0 H7 L3.5 4 Z" fill="#505050"/></svg>
<div class="a" style="left:231px;top:624px;width:1117px;height:17px;background:#f1f1f1;"></div>
<div class="a" style="left:248px;top:626px;width:411px;height:13px;background:#c1c1c1;"></div>
<svg style="left:237px;top:629px;" width="4" height="7" viewBox="0 0 4 7"><path d="M4 0 V7 L0 3.5 Z" fill="#a3a3a3"/></svg>
<svg style="left:1337px;top:629px;" width="4" height="7" viewBox="0 0 4 7"><path d="M0 0 V7 L4 3.5 Z" fill="#505050"/></svg>
<div class="a" style="left:1348px;top:624px;width:17px;height:17px;background:#dcdcdc;"></div>
<div class="a" style="left:231px;top:641px;width:1134px;height:1px;background:#e4e4e4;"></div>
<div class="a" style="left:231px;top:642px;width:1134px;height:39px;background:#fafafa;border-bottom:1px solid #dedede"></div>
<div class="a" style="left:246px;top:658px;width:5px;height:11px;background:#eeeeee;"></div>
<div class="a" style="left:253px;top:658px;width:5px;height:11px;background:#ebebeb;"></div>
<div class="a" style="left:260px;top:658px;width:5px;height:11px;background:#e9e9e9;"></div>
<div class="a" style="left:267px;top:658px;width:5px;height:11px;background:#d9d9d9;"></div>
<div class="a" style="left:231px;top:687px;width:1134px;height:1px;background:#d2d2d2;"></div>
<div class="a" style="left:0px;top:728px;width:1366px;height:40px;background:#432e28;"></div>
<svg style="left:15px;top:740px;" width="17" height="17" viewBox="0 0 17 17"><path d="M0 2.3 L7 1.3 V7.7 H0 Z M8 1.1 L16.5 0 V7.7 H8 Z M0 8.7 H7 V15.2 L0 14.2 Z M8 8.7 H16.5 V16.5 L8 15.4 Z" fill="#fff"/></svg>
<div class="a" style="left:48px;top:728px;width:288px;height:40px;background:#f0f0f0;border-top:1px solid #c8c8c8"></div>
<svg style="left:60px;top:740px;" width="17" height="17" viewBox="0 0 17 17"><circle cx="10.5" cy="6" r="5.2" fill="none" stroke="#222" stroke-width="1.3"/><path d="M6.8 9.7 L0.8 15.7" stroke="#222" stroke-width="1.4"/></svg>
<div class="t" style="left:88.30px;top:742.00px;font-size:14.600px;line-height:14.600px;color:#1e1e1e;letter-spacing:-0.119px;">Type here to search</div>
<svg style="left:265px;top:730px;" width="68" height="38" viewBox="0 0 68 38"><path d="M0 38 C10 35 18 33.5 24 33 C28 30.5 36 30.5 40 33 C50 33.5 58 35 68 38 Z" fill="#7a4a30"/><path d="M26 33 C30 31 35 31 39 33 Z" fill="#c08a50"/><path d="M31 33 V16" stroke="#3a9a3e" stroke-width="1.6"/><path d="M31 19 C26.5 14 26.5 6 31.5 0.5 C36 6 35.5 14 31 19 Z" fill="#3fa848"/><path d="M30 22 C24 21 18.5 16 17 10.5 C23 11 29 15.5 30 22 Z" fill="#3fa848"/><path d="M32 22 C38 20 42.5 16.5 45 12.5 C39.5 12.5 33.5 15.5 32 22 Z" fill="#3fa848"/><path d="M30 28 C24.5 27.5 20.5 25 18.5 21.5 C24 20.5 28.5 23 30 28 Z" fill="#3fa848"/><path d="M32 29 C36.5 27 39 24 39.8 20.8 C35.5 21 32.8 24.5 32 29 Z" fill="#3fa848"/><path d="M31 18 L29 16 M24 15 L30 21 M37 16 L32 21 M23 23 L30 27" stroke="#4a5a50" stroke-width="0.7" opacity="0.7"/></svg>
<svg style="left:352px;top:740px;" width="17" height="16" viewBox="0 0 17 16"><path d="M1 0.6 H11 M1 15.4 H11 M2 3.5 H10.5 V12.5 H2 Z M14 1 V3 M14 6 V10 M14 13 V15" fill="none" stroke="#fff" stroke-width="1.3"/></svg>
<div class="a" style="left:390px;top:739px;width:1px;height:17px;background:#7d6a65;"></div>
<div class="a" style="left:393px;top:739px;width:1px;height:17px;background:#7d6a65;"></div>
<svg style="left:420px;top:739px;" width="22" height="17" viewBox="0 0 22 17"><path d="M0.5 2 C0.5 1 1 0.5 2 0.5 H8 L10 2.5 H20 C21 2.5 21.5 3 21.5 4 V16.5 H0.5 Z" fill="#f0c36d"/><path d="M0.5 5 H21.5 V16.5 H0.5 Z" fill="#f8d889"/><path d="M6 9 H16 V16.5 H13 V13 H9 V16.5 H6 Z" fill="#2f8ee0"/></svg>
<svg style="left:468.5px;top:735.5px;" width="24" height="24" viewBox="0 0 24 24"><circle cx="11.5" cy="11.5" r="11.5" fill="#db3c2e"/><path d="M11.5 11.5 L21.459 17.25 A11.5 11.5 0 0 1 1.5410000000000004 17.25 Z" fill="#2da44e"/><path d="M11.5 11.5 L11.5 23.0 A11.5 11.5 0 0 1 1.5410000000000004 17.25 L1.5410000000000004 5.75 Z" fill="#2da44e"/><path d="M11.5 11.5 L21.459 5.75 A11.5 11.5 0 0 1 11.5 23.0 Z" fill="#f6c21c"/><circle cx="11.5" cy="11.5" r="5.52" fill="#fff"/><circle cx="11.5" cy="11.5" r="4.14" fill="#2f7ee8"/></svg>
<div class="a" style="left:479px;top:747px;width:14px;height:14px;background:#f1e6c9;border-radius:7px"></div>
<svg style="left:481px;top:749px;" width="10" height="10" viewBox="0 0 10 10"><path d="M1 6 C2 3 5 2 8 3 C9 5 7 8 4 8 Z" fill="#c5783a"/></svg>
<div class="a" style="left:460px;top:766px;width:40px;height:2px;background:#78b7ea;"></div>
<div class="a" style="left:505px;top:728px;width:48px;height:40px;background:#6a5651;"></div>
<svg style="left:517.5px;top:735.5px;" width="24" height="24" viewBox="0 0 24 24"><circle cx="11.5" cy="11.5" r="11.5" fill="#db3c2e"/><path d="M11.5 11.5 L21.459 17.25 A11.5 11.5 0 0 1 1.5410000000000004 17.25 Z" fill="#2da44e"/><path d="M11.5 11.5 L11.5 23.0 A11.5 11.5 0 0 1 1.5410000000000004 17.25 L1.5410000000000004 5.75 Z" fill="#2da44e"/><path d="M11.5 11.5 L21.459 5.75 A11.5 11.5 0 0 1 11.5 23.0 Z" fill="#f6c21c"/><circle cx="11.5" cy="11.5" r="5.52" fill="#fff"/><circle cx="11.5" cy="11.5" r="4.14" fill="#2f7ee8"/></svg>
<div class="a" style="left:527px;top:747px;width:15px;height:15px;background:#3b2620;border-radius:8px"></div>
<div class="t" style="left:531.50px;top:751.00px;font-size:10.000px;line-height:10.000px;color:#e8e8e8;">k</div>
<div class="a" style="left:505px;top:766px;width:48px;height:2px;background:#78b7ea;"></div>
<div class="a" style="left:869px;top:737px;width:22px;height:22px;background:#fff;border-radius:11px"></div>
<div class="a" style="left:870.5px;top:738.5px;width:19px;height:19px;background:#2f88d8;border-radius:10px"></div>
<div class="t" style="left:874.50px;top:742.00px;font-size:16.000px;line-height:16.000px;color:#fff;font-weight:bold;">?</div>
<div class="a" style="left:882px;top:748px;width:10px;height:10px;background:#f5a623;border-radius:5px"></div>
<div class="a" style="left:886px;top:750px;width:2px;height:6px;background:#fff;"></div>
<div class="a" style="left:942px;top:739px;width:20px;height:20px;background:#d99a4e;border-radius:10px"></div>
<svg style="left:939px;top:735px;" width="15" height="11" viewBox="0 0 15 11"><path d="M1 10 C0 10 0 6.5 2.5 6.5 C2.5 3.5 5 2 7 3.5 C8 1 12 1 12.5 4.5 C14.5 4.5 14.5 10 12.5 10 Z" fill="#a9cbec"/></svg>
<svg style="left:949px;top:747px;" width="16" height="11" viewBox="0 0 16 11"><path d="M1 10 C0 10 0 6.5 2.5 6.5 C2.5 3.5 5 2 7 3.5 C8 1 12 1 12.5 4.5 C14.5 4.5 14.5 10 12.5 10 Z" fill="#a9cbec"/></svg>
<div class="t" style="left:972.00px;top:741.00px;font-size:14.000px;line-height:14.000px;color:#fff;letter-spacing:-0.759px;">30°C</div>
<div class="t" style="left:1010.40px;top:741.00px;font-size:14.000px;line-height:14.000px;color:#fff;letter-spacing:-0.293px;">Partly sunny</div>
<svg style="left:1108px;top:745px;" width="14" height="8" viewBox="0 0 14 8"><path d="M1 7.5 L7 1.5 L13 7.5" fill="none" stroke="#fff" stroke-width="1.3"/></svg>
<svg style="left:1133px;top:740px;" width="13" height="16" viewBox="0 0 13 16"><rect x="0.8" y="5" width="8" height="6.5" rx="1.5" fill="none" stroke="#fff" stroke-width="1.1"/><path d="M8.8 7 L12 5.3 V11.2 L8.8 9.5" fill="none" stroke="#fff" stroke-width="1.1"/><path d="M2 2.5 C4 0.5 7 0.5 9 2.5 M2 14 C4 16 7 16 9 14" fill="none" stroke="#fff" stroke-width="1"/></svg>
<svg style="left:1155px;top:740px;" width="17" height="16" viewBox="0 0 17 16"><path d="M0.8 5.5 H3.5 L7.5 1.5 V14.5 L3.5 10.5 H0.8 Z" fill="none" stroke="#fff" stroke-width="1.1"/><path d="M10 5.5 C11 6.5 11 9.5 10 10.5 M12.3 3.5 C14 5.5 14 10.5 12.3 12.5 M14.5 1.5 C17 4.5 17 11.5 14.5 14.5" fill="none" stroke="#fff" stroke-width="1.1"/></svg>
<svg style="left:1179px;top:741px;" width="24" height="13" viewBox="0 0 24 13"><rect x="0.6" y="0.6" width="22.8" height="11.8" fill="none" stroke="#fff" stroke-width="1.2"/><path d="M3 3.5 H21 M3 6.3 H21 M6 9.2 H18" stroke="#fff" stroke-width="1" stroke-dasharray="1.2 1"/></svg>
<div class="t" style="left:1213.00px;top:742.00px;font-size:10.600px;line-height:10.600px;color:#fff;letter-spacing:0.015px;">ENG</div>
<div class="t" style="left:1254.00px;top:734.00px;font-size:11.350px;line-height:11.350px;color:#fff;letter-spacing:0.007px;">10:27 AM</div>
<div class="t" style="left:1249.00px;top:751.00px;font-size:11.350px;line-height:11.350px;color:#fff;letter-spacing:-0.006px;">05-06-2024</div>
<svg style="left:1325px;top:740px;" width="17" height="17" viewBox="0 0 17 17"><path d="M0.6 0.6 H16.4 V12 H10 L8.5 15.5 L7 12 H0.6 Z" fill="none" stroke="#fff" stroke-width="1.1"/></svg>
<div class="a" style="left:1361px;top:728px;width:1px;height:40px;background:#6d5a55;"></div>
</body></html>
